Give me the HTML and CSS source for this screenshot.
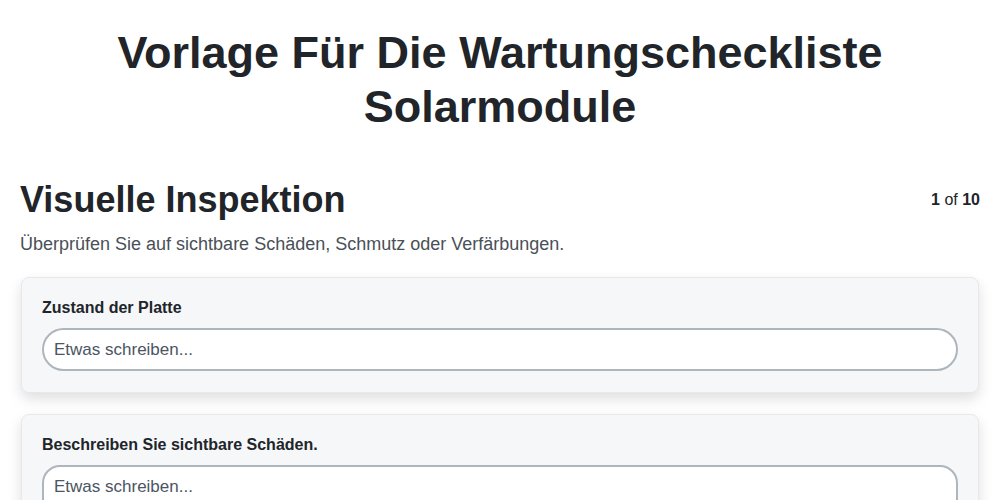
FILE: index.html
```html
<!DOCTYPE html>
<html lang="de">
<head>
    <meta charset="UTF-8">
    <meta name="viewport" content="width=device-width, initial-scale=1.0">
    <title>Vorlage Für Die Wartungscheckliste Solarmodule</title>
    <link rel="stylesheet" href="styles.css">
</head>
<body>
    <h1 class="page-title">Vorlage Für Die Wartungscheckliste Solarmodule</h1>

    <div class="section-header">
        <h2 class="section-title">Visuelle Inspektion</h2>
        <div class="step-count"><b>1</b> of <b>10</b></div>
    </div>
    <p class="section-desc">Überprüfen Sie auf sichtbare Schäden, Schmutz oder Verfärbungen.</p>

    <div class="card">
        <label class="field-label" for="zustand">Zustand der Platte</label>
        <input class="field-input" id="zustand" type="text" placeholder="Etwas schreiben...">
    </div>

    <div class="card">
        <label class="field-label" for="schaeden">Beschreiben Sie sichtbare Schäden.</label>
        <textarea class="field-area" id="schaeden" rows="4" placeholder="Etwas schreiben..."></textarea>
    </div>
</body>
</html>
```

FILE: styles.css
```css
body {
    font-family: "Liberation Sans", Arial, sans-serif;
    color: #212529;
    background-color: #ffffff;
    margin: 0;
    padding: 0 20px 40px;
}

.page-title {
    font-size: 45px;
    line-height: 54px;
    text-align: center;
    margin: 26px 0 44px;
    padding: 0 60px;
}

.section-header {
    display: flex;
    justify-content: space-between;
    align-items: center;
}

.section-title {
    font-size: 36px;
    margin: 0;
    line-height: 44px;
}

.step-count {
    font-size: 16px;
}

.section-desc {
    font-size: 18px;
    color: #495057;
    margin: 12px 0 22px;
}

.card {
    background-color: #f6f7f9;
    border: 1px solid #e6e8eb;
    border-radius: 8px;
    box-shadow: 0 6px 14px rgba(0, 0, 0, 0.13);
    padding: 21px 20px 21px 20px;
    margin: 0 1px 21px;
    display: flex;
    flex-direction: column;
}

.field-label {
    font-weight: bold;
    font-size: 16px;
    margin-bottom: 11px;
}

.field-input,
.field-area {
    font-family: inherit;
    font-size: 17px;
    color: #212529;
    background-color: #ffffff;
    border: 2px solid #adb5bd;
    padding: 10px 10px;
    outline: none;
}

.field-input {
    border-radius: 22px;
    height: 43px;
    box-sizing: border-box;
}

.field-area {
    border-radius: 18px;
    resize: none;
}

.field-input::placeholder,
.field-area::placeholder {
    color: #4b5563;
}
```
